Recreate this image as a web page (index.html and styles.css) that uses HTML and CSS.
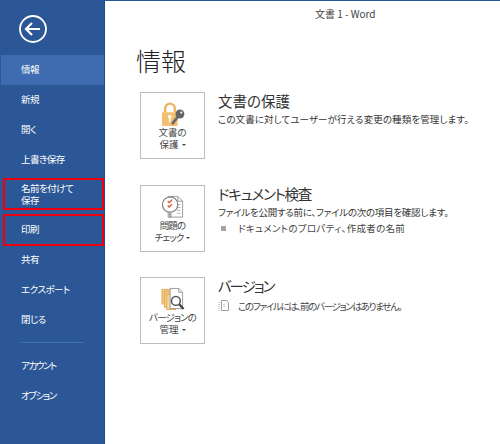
FILE: index.html
```html
<!DOCTYPE html>
<html lang="ja">
<head>
<meta charset="utf-8">
<title>文書 1 - Word</title>
<link rel="stylesheet" href="styles.css">
</head>
<body>
<div class="app">
  <nav class="side">
    <div class="back">
      <svg width="30" height="30" viewBox="0 0 30 30" fill="none" stroke="#fff"><circle cx="15" cy="15" r="13" stroke-width="1.8"/><path d="M8 15h14M14 9l-6 6 6 6" stroke-width="2.2"/></svg>
    </div>
    <div class="item active">情報</div>
    <div class="item">新規</div>
    <div class="item">開く</div>
    <div class="item">上書き保存</div>
    <div class="item two"><div class="line">名前を付けて</div><div class="line">保存</div></div>
    <div class="item">印刷</div>
    <div class="item">共有</div>
    <div class="item">エクスポート</div>
    <div class="item">閉じる</div>
    <div class="rule"></div>
    <div class="item tight">アカウント</div>
    <div class="item tight">オプション</div>
    <div class="mark mark-a"></div>
    <div class="mark mark-b"></div>
  </nav>
  <main class="main">
    <div class="title">文書 1 - Word</div>
    <h1 class="page">情報</h1>
    <section class="card">
      <div class="tile">
        <svg width="26" height="24" viewBox="0 0 26 26">
          <path d="M4.500 11V7a5.200 5.200 0 0 1 10.400 0v4" fill="none" stroke="#eeb55f" stroke-width="2.600"/>
          <rect x="1" y="11" width="17" height="15" rx="1" fill="#f2bf70"/>
          <circle cx="9.500" cy="16" r="2" fill="#fff"/>
          <rect x="8.700" y="16" width="1.600" height="6" fill="#fff"/>
          <path d="M19 15l-7 9" stroke="#6a6a6a" stroke-width="3" fill="none"/>
          <circle cx="20.500" cy="13" r="4.800" fill="#666"/>
          <circle cx="22" cy="11.500" r="1.100" fill="#fff"/>
        </svg>
        <div class="tile-label"><div>文書の</div><div>保護<span class="caret"></span></div></div>
      </div>
      <div class="body">
        <h2 class="head">文書の保護</h2>
        <p class="desc d-a">この文書に対してユーザーが行える変更の種類を管理します。</p>
      </div>
    </section>
    <section class="card">
      <div class="tile">
        <svg width="26" height="24" viewBox="0 0 26 25" fill="none">
          <path d="M8 1.500h10l5 5v16.500H8z" fill="#fff" stroke="#9a9a9a"/>
          <path d="M18 1.500v5h5" stroke="#9a9a9a"/>
          <path d="M17 10h4M17 13h4M17 16h4M17 19h4" stroke="#b5b5b5"/>
          <circle cx="10" cy="10" r="8" fill="#fff" stroke="#777" stroke-width="1.100"/>
          <path d="M7.500 6.500l1.500 1.500 3-3M7.500 11l1.500 1.500 3-3" stroke="#d9502e" stroke-width="1.300"/>
          <rect x="8.500" y="17" width="3" height="7" fill="#a8a8a8"/>
        </svg>
        <div class="tile-label"><div class="squeeze">問題の</div><div><span class="squeeze">チェック</span><span class="caret"></span></div></div>
      </div>
      <div class="body">
        <h2 class="head h-b">ドキュメント検査</h2>
        <p class="desc d-b">ファイルを公開する前に、ファイルの次の項目を確認します。</p>
        <div class="sub s-b"><span class="bullet"></span><span>ドキュメントのプロパティ、作成者の名前</span></div>
      </div>
    </section>
    <section class="card">
      <div class="tile">
        <svg width="26" height="24" viewBox="0 0 26 25" fill="none">
          <rect x="1.500" y="2.500" width="9" height="15" fill="#f3c98a" stroke="#e6a850"/>
          <rect x="4" y="5" width="9" height="16" fill="#f3c98a" stroke="#e6a850"/>
          <rect x="6.500" y="7.500" width="9" height="16" fill="#f6d6a4" stroke="#e6a850"/>
          <path d="M10 1.500h9l4 4v17H10z" fill="#fff" stroke="#9a9a9a"/>
          <path d="M19 1.500v4h4" stroke="#9a9a9a"/>
          <circle cx="16" cy="14.500" r="4.600" fill="#fff" stroke="#555" stroke-width="1.600"/>
          <path d="M19.500 18l4.500 5" stroke="#444" stroke-width="2.400"/>
        </svg>
        <div class="tile-label"><div class="squeeze">バージョンの</div><div>管理<span class="caret"></span></div></div>
      </div>
      <div class="body">
        <h2 class="head h-c">バージョン</h2>
        <div class="sub sub-v">
          <svg class="doc" width="12" height="13" viewBox="0 0 12 13" fill="none" stroke="#a0a0a0"><path d="M3.500 1.500h5l2 2v8h-7z"/><path d="M1 3v9M6 5v4" stroke-dasharray="1 1"/></svg>
          <span class="s-c">このファイルには、前のバージョンはありません。</span>
        </div>
      </div>
    </section>
  </main>
</div>
</body>
</html>
```
FILE: styles.css
```css
* { box-sizing: border-box; }
html, body { margin: 0; padding: 0; background: #fff; }
body {
  width: 500px;
  height: 444px;
  overflow: hidden;
  font-family: "Noto Sans CJK JP", "Liberation Sans", sans-serif;
  font-feature-settings: "palt";
}
.app { display: flex; width: 500px; height: 444px; }
.side {
  position: relative;
  width: 105px;
  flex: none;
  background: #2b5797;
  border-right: 1px solid #1f4a8c;
  color: #fff;
}
.back { height: 55px; padding: 14px 0 0 18px; }
.back svg { display: block; }
.item {
  display: flex;
  align-items: center;
  height: 30px;
  padding: 0 0 2px 21px;
  font-size: 9.5px;
  line-height: 12px;
  letter-spacing: -0.5px;
}
.item.tight { letter-spacing: -1.4px; }
.item.active { background: #3f6cb1; margin-left: 1px; padding-left: 20px; }
.item.two { display: block; height: 40px; padding-top: 7px; }
.rule { height: 1px; margin: 7px 20px 8px 21px; background: #4070b0; }
.mark { position: absolute; left: 3px; width: 101px; border: 2.5px solid #f0000e; border-radius: 1px; }
.mark-a { top: 178px; height: 32px; }
.mark-b { top: 214px; height: 32px; }
.main { flex: 1; min-width: 0; border-top: 1px solid #2b5797; padding-left: 32px; }
.title { margin-left: 178px; margin-top: 6px; height: 13px; font-size: 10px; line-height: 13px; color: #444; }
.page { margin: 22px 0 0 -1px; font-size: 25px; line-height: 36px; height: 36px; font-weight: 300; color: #222; }
.card { display: flex; height: 92.5px; }
.card:first-of-type { margin-top: 14px; }
.tile {
  width: 65px;
  height: 67px;
  flex: none;
  margin-left: 3px;
  border: 1px solid #bdbdbd;
  background: #fff;
  display: flex;
  flex-direction: column;
  align-items: center;
  padding-top: 9px;
}
.tile svg { display: block; flex: none; }
.tile-label { text-align: center; font-size: 9.5px; line-height: 12px; color: #444; white-space: nowrap; }
.squeeze { letter-spacing: -0.9px; }
.caret {
  display: inline-block;
  margin-left: 3px;
  vertical-align: middle;
  border-left: 2px solid transparent;
  border-right: 2px solid transparent;
  border-top: 2px solid #444;
}
.body { margin-left: 13px; color: #333; }
.head { margin: 0; font-size: 14.5px; line-height: 18px; font-weight: 400; color: #333; }
.h-b { letter-spacing: -1.25px; }
.h-c { letter-spacing: -2px; }
.desc { margin: 3px 0 0; font-size: 9.5px; line-height: 13px; color: #333; white-space: nowrap; }
.d-a { letter-spacing: 0.1px; }
.d-b { letter-spacing: -0.25px; }
.sub { display: flex; align-items: center; height: 15px; margin-top: 2px; font-size: 9.5px; color: #444; white-space: nowrap; }
.s-b { letter-spacing: 0.3px; }
.s-c { letter-spacing: -1.3px; }
.sub-v { margin-top: 3px; }
.bullet { width: 5px; height: 5px; background: #a5a5a5; margin: 0 12px 0 3px; }
.doc { margin-right: 8px; }
```
